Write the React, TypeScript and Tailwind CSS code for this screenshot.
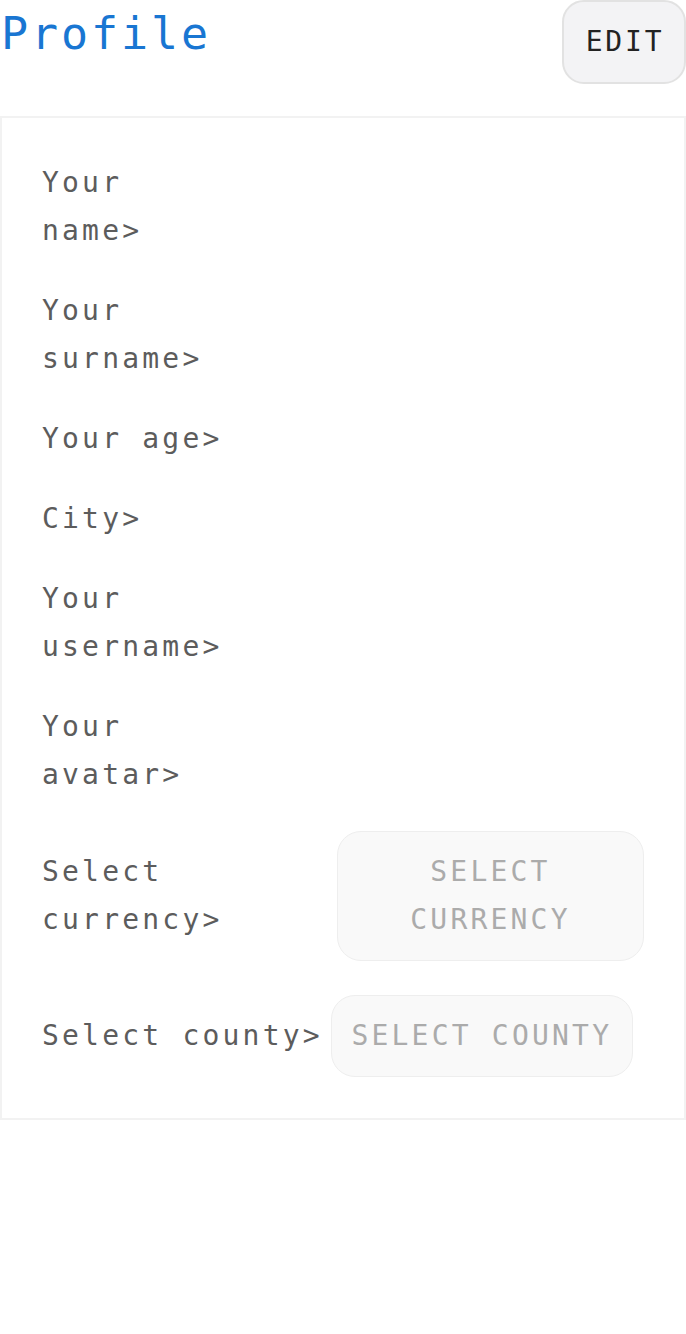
const mono = "font-['DejaVu_Sans_Mono','Liberation_Mono',monospace]";

const fields: string[][] = [
  ['Your', 'name>'],
  ['Your', 'surname>'],
  ['Your age>'],
  ['City>'],
  ['Your', 'username>'],
  ['Your', 'avatar>'],
];

function Label({ lines }: { lines: string[] }) {
  return (
    <div className="text-[28px] leading-[48px] tracking-[3.2px] text-[#5c5c5c] whitespace-nowrap">
      {lines.map((l, i) => (
        <div key={i}>{l}</div>
      ))}
    </div>
  );
}

export default function App() {
  return (
    <div className={`${mono} w-[686px] min-h-[1334px] bg-white`}>
      <div className="flex items-start justify-between">
        <h1 className="text-[45px] leading-[68px] tracking-[2.9px] text-[#1976d2] pl-[1px]">Profile</h1>
        <button className="w-[124px] h-[84px] rounded-[22px] border-2 border-[#e2e2e2] bg-[#f3f3f5] text-[28px] tracking-[2.8px] text-[#222] pl-[2px]">
          EDIT
        </button>
      </div>

      <div className="mt-[32px] border-2 border-[#f2f2f2] px-[40px] pt-[41px] pb-[41px] flex flex-col gap-[32px]">
        {fields.map((f, i) => (
          <Label key={i} lines={f} />
        ))}

        <div className="flex items-center justify-between">
          <Label lines={['Select', 'currency>']} />
          <button className="w-[307px] rounded-[24px] border border-[#eeeeee] bg-[#f9f9f9] py-4 text-[28px] leading-[48px] tracking-[3.2px] text-[#ababab] text-center">
            SELECT
            <br />
            CURRENCY
          </button>
        </div>

        <div className="mt-[2px] flex items-center gap-[8px]">
          <Label lines={['Select county>']} />
          <button className="w-[302px] rounded-[24px] border border-[#eeeeee] bg-[#f9f9f9] py-4 text-[28px] leading-[48px] tracking-[3.2px] text-[#ababab] text-center whitespace-nowrap">
            SELECT COUNTY
          </button>
        </div>
      </div>
    </div>
  );
}
